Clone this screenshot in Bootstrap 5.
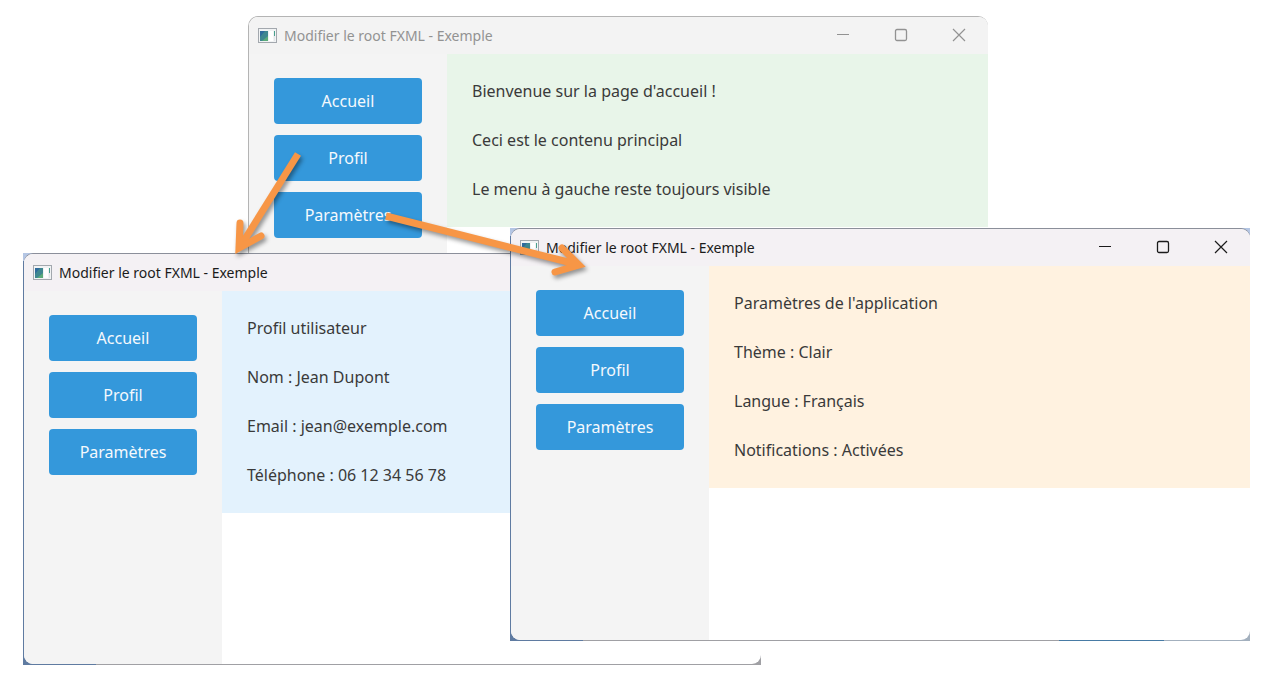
<!DOCTYPE html>
<html lang="fr">
<head>
<meta charset="utf-8">
<meta name="viewport" content="width=device-width, initial-scale=1">
<title>Modifier le root FXML - Exemple</title>
<link href="https://cdn.jsdelivr.net/npm/bootstrap@5.3.0/dist/css/bootstrap.min.css" rel="stylesheet">
<style>
  body { font-family: "Noto Sans", "Open Sans", sans-serif; background: #fff; color: #3a3a3a; }
  .desktop { min-height: 100vh; }
  /* One application window; the padding shows the frame colour */
  .app-window { position: absolute; width: 740px; height: 413px; padding: 1px 0 1px 1px; overflow: hidden; }
  .win-home { left: 248px; top: 16px; background: #b4b4b4; border-radius: 10px 10px 0 0; }
  .win-profile { left: 23px; top: 253px; width: 738px; height: 412px;
    background: linear-gradient(#b4c6e4, #b4c6e4) 0 0 / 100% 8px no-repeat, linear-gradient(90deg, #5f7ba1 73px, #a0a0a4 73px); }
  .win-settings { left: 510px; top: 228px;
    background: linear-gradient(#b4c6e4, #b4c6e4) 0 0 / 100% 8px no-repeat, linear-gradient(90deg, #5f7ba1 73px, #a0a0a4 73px 549px, #477ba5 549px 654px, #a3b0be 654px); }
  .win-inner { border-radius: 9px; overflow: hidden; background: #fff; box-shadow: 0 -1px 0 #8b8f9a; }
  .win-home .win-inner { box-shadow: none; }
  .title-bar { height: 37px; background: #f4f1f4; color: #1b1b1b; font-size: 14px; padding-left: 9px; padding-bottom: 1px; gap: 7px; }
  .win-home .title-bar { background: #f3f3f3; color: #929292; }
  .win-btn { width: 58px; height: 36px; color: inherit; }
  .side-menu { width: 198px; padding: 24px 25px; gap: 11px; background: #f4f4f4; }
  .menu-btn { height: 46px; padding: 0; border: 0; border-radius: 4px; font-size: 16px;
    --bs-btn-color: #f4f9fd; --bs-btn-bg: #3498db; --bs-btn-hover-color: #fff; --bs-btn-hover-bg: #2980b9; }
  .page-pane { padding: 25px 25px 26px; gap: 25px; font-size: 16px; line-height: 24px; }
  .pane-green { background: #e8f5e9; }
  .pane-blue { background: #e3f2fd; }
  .pane-orange { background: #fff2e0; }
  .arrows { position: absolute; left: 0; top: 0; pointer-events: none; filter: drop-shadow(2px 3px 2px rgba(0,0,0,.4)); }
</style>
</head>
<body>
<svg class="d-none" aria-hidden="true">
  <symbol id="app" viewBox="0 0 19 15">
    <rect x=".5" y=".5" width="18" height="14" fill="#f1f3f4" stroke="#a3a8ae"/>
    <rect x="2" y="3" width="8" height="10" fill="#3f8790"/>
    <path d="M2 3h5L2 9z" fill="#2f6b9c"/><path d="M10 8v5H4z" fill="#5bab7a"/>
    <path d="M11 3h4v10h-4z" fill="#fff"/><path d="M16 3h1v5h-1z" fill="#49a08e"/><path d="M16 8h1v5h-1z" fill="#e3e5ea"/>
  </symbol>
  <symbol id="min" viewBox="0 0 14 14"><path d="M1 6.5h12" stroke="currentColor" stroke-width="1.2"/></symbol>
  <symbol id="max" viewBox="0 0 14 14"><rect x="1.5" y="1.5" width="11" height="11" rx="1.5" fill="none" stroke="currentColor" stroke-width="1.3"/></symbol>
  <symbol id="close" viewBox="0 0 14 14"><path d="M1 1l12 12M13 1L1 13" stroke="currentColor" stroke-width="1.2"/></symbol>
</svg>

<main class="desktop position-relative overflow-hidden">
  <section class="app-window win-home">
    <div class="win-inner h-100 d-flex flex-column">
      <header class="title-bar d-flex align-items-center flex-shrink-0">
        <svg width="19" height="15"><use href="#app"/></svg>
        <span class="me-auto">Modifier le root FXML - Exemple</span>
        <div class="d-flex">
          <button type="button" class="win-btn btn border-0 p-0 d-flex align-items-center justify-content-center" aria-label="Réduire"><svg width="14" height="14"><use href="#min"/></svg></button>
          <button type="button" class="win-btn btn border-0 p-0 d-flex align-items-center justify-content-center" aria-label="Agrandir"><svg width="14" height="14"><use href="#max"/></svg></button>
          <button type="button" class="win-btn btn border-0 p-0 d-flex align-items-center justify-content-center" aria-label="Fermer"><svg width="14" height="14"><use href="#close"/></svg></button>
        </div>
      </header>
      <div class="d-flex flex-grow-1">
        <nav class="side-menu d-flex flex-column flex-shrink-0">
          <button type="button" class="menu-btn btn">Accueil</button>
          <button type="button" class="menu-btn btn">Profil</button>
          <button type="button" class="menu-btn btn">Paramètres</button>
        </nav>
        <div class="flex-grow-1">
          <div class="page-pane pane-green d-flex flex-column">
            <div>Bienvenue sur la page d'accueil !</div>
            <div>Ceci est le contenu principal</div>
            <div>Le menu à gauche reste toujours visible</div>
          </div>
        </div>
      </div>
    </div>
  </section>

  <section class="app-window win-profile">
    <div class="win-inner h-100 d-flex flex-column">
      <header class="title-bar d-flex align-items-center flex-shrink-0">
        <svg width="19" height="15"><use href="#app"/></svg>
        <span class="me-auto">Modifier le root FXML - Exemple</span>
      </header>
      <div class="d-flex flex-grow-1">
        <nav class="side-menu d-flex flex-column flex-shrink-0">
          <button type="button" class="menu-btn btn">Accueil</button>
          <button type="button" class="menu-btn btn">Profil</button>
          <button type="button" class="menu-btn btn">Paramètres</button>
        </nav>
        <div class="flex-grow-1">
          <div class="page-pane pane-blue d-flex flex-column">
            <div>Profil utilisateur</div>
            <div>Nom : Jean Dupont</div>
            <div>Email : jean@exemple.com</div>
            <div>Téléphone : 06 12 34 56 78</div>
          </div>
        </div>
      </div>
    </div>
  </section>

  <section class="app-window win-settings">
    <div class="win-inner h-100 d-flex flex-column">
      <header class="title-bar d-flex align-items-center flex-shrink-0">
        <svg width="19" height="15"><use href="#app"/></svg>
        <span class="me-auto">Modifier le root FXML - Exemple</span>
        <div class="d-flex">
          <button type="button" class="win-btn btn border-0 p-0 d-flex align-items-center justify-content-center" aria-label="Réduire"><svg width="14" height="14"><use href="#min"/></svg></button>
          <button type="button" class="win-btn btn border-0 p-0 d-flex align-items-center justify-content-center" aria-label="Agrandir"><svg width="14" height="14"><use href="#max"/></svg></button>
          <button type="button" class="win-btn btn border-0 p-0 d-flex align-items-center justify-content-center" aria-label="Fermer"><svg width="14" height="14"><use href="#close"/></svg></button>
        </div>
      </header>
      <div class="d-flex flex-grow-1">
        <nav class="side-menu d-flex flex-column flex-shrink-0">
          <button type="button" class="menu-btn btn">Accueil</button>
          <button type="button" class="menu-btn btn">Profil</button>
          <button type="button" class="menu-btn btn">Paramètres</button>
        </nav>
        <div class="flex-grow-1">
          <div class="page-pane pane-orange d-flex flex-column">
            <div>Paramètres de l'application</div>
            <div>Thème : Clair</div>
            <div>Langue : Français</div>
            <div>Notifications : Activées</div>
          </div>
        </div>
      </div>
    </div>
  </section>

  <!-- Arrows from a menu button to the window it opens -->
  <svg class="arrows" width="620" height="300" fill="none" stroke="#f79646" stroke-width="7" aria-hidden="true">
    <path d="M298 154L240 247"/>
    <path d="M240 223L239 248L261 236" stroke-linecap="round"/>
    <path d="M386 216L576 264"/>
    <path d="M562 248L579 265L555 272" stroke-linecap="round"/>
  </svg>
</main>
<script src="https://cdn.jsdelivr.net/npm/bootstrap@5.3.0/dist/js/bootstrap.bundle.min.js"></script>
</body>
</html>
